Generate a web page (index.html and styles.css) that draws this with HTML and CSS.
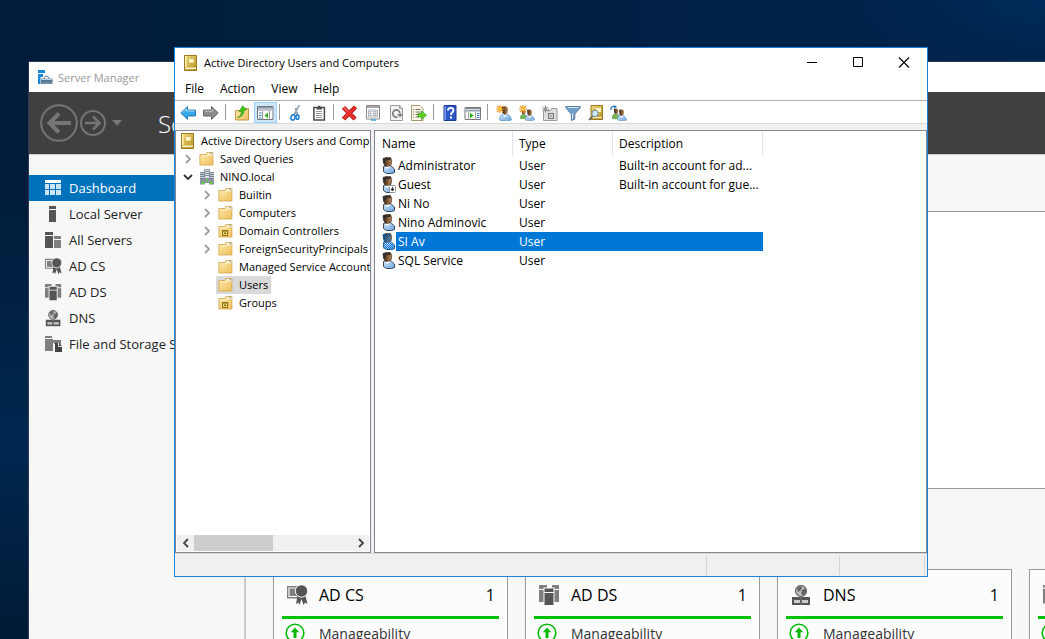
FILE: index.html
```html
<!DOCTYPE html>
<html lang="en">
<head>
  <meta charset="UTF-8">
  <title>Active Directory Users and Computers</title>
  <link rel="stylesheet" href="styles.css">
</head>
<body>

<!-- Shared icons -->
<svg class="sprite" aria-hidden="true">
  <defs>
    <linearGradient id="gold" x1="0" y1="0" x2="1" y2="1">
      <stop offset="0" stop-color="#f0dc82"/><stop offset="1" stop-color="#b98f1c"/>
    </linearGradient>
    <linearGradient id="paper" x1="0" y1="0" x2="1" y2="1">
      <stop offset="0" stop-color="#fce9ac"/><stop offset="1" stop-color="#eec05c"/>
    </linearGradient>
    <linearGradient id="shirt" x1="0" y1="0" x2="1" y2="1">
      <stop offset="0" stop-color="#d3e8fa"/><stop offset="1" stop-color="#6aa5df"/>
    </linearGradient>
    <linearGradient id="skin" x1="0" y1="0" x2="1" y2="0">
      <stop offset="0" stop-color="#2b2119"/><stop offset=".4" stop-color="#6b4a2d"/><stop offset="1" stop-color="#c08c5c"/>
    </linearGradient>
    <pattern id="checker" width="2" height="2" patternUnits="userSpaceOnUse">
      <path d="M0 0h1v1H0zM1 1h1v1H1z" fill="#0078d7"/>
    </pattern>
  </defs>
  <symbol id="book" viewBox="0 0 16 16">
    <path d="M1.500.5h12v15h-12z" fill="url(#gold)" stroke="#9a7a1d"/>
    <path d="M2 1h1.500v11H2z" fill="#fff3b5"/>
    <path d="M5.500 3.500h5.500v4.500H5.500z" fill="#fff6c8" stroke="#c9a83c" stroke-width=".6"/>
    <path d="M2.500 12.500h10.500v1.500H2.500z" fill="#f7f0d2"/>
  </symbol>
  <symbol id="folder" viewBox="0 0 16 16">
    <path d="M.9 3.500h6l1-2h6v12.500H.9z" fill="url(#paper)" stroke="#d1a448" stroke-width=".8"/>
    <path d="M8.500 2.300h5v1.200h-5z" fill="#fff"/>
    <path d="M11.500 2.300h1.500v1.200h-1.500z" fill="#3d8fdc"/>
    <path d="M2 5h6l1-1h4.500" fill="none" stroke="#fff3cc" stroke-width=".9"/>
  </symbol>
  <symbol id="ou" viewBox="0 0 16 16">
    <use href="#folder"/>
    <path d="M4 7h6v6H4z" fill="#8d741c"/>
    <path d="M5 8.500h4v3.500H5z" fill="#e6d268"/>
    <path d="M6 9.500h2v1.500H6z" fill="#8d741c"/>
  </symbol>
  <symbol id="domain" viewBox="0 0 16 16">
    <path d="M1 3h5v10H1zM10 3h5v10h-5z" fill="#c3ccd4"/>
    <path d="M5.500.5h5v12h-5z" fill="#dfe5ea" stroke="#75828e" stroke-width=".8"/>
    <path d="M1 3.500h4.500M1 5.500h4.500M1 7.500h4.500M1 9.500h4.500M10.500 3.500H15M10.500 5.500H15M10.500 7.500H15M10.500 9.500H15M6 2.500h4M6 4.500h4M6 6.500h4" stroke="#66737f" stroke-width=".8"/>
    <path d="M1 10h5v5.500H1zM10 10h5v5.500h-5zM6 9h4v5H6z" fill="#8a969f"/>
    <path d="M3 13h2v2H3zM11 13h2v2h-2zM7 10.500h2V12H7z" fill="#5ad71a"/>
  </symbol>
  <symbol id="user" viewBox="0 0 14 17">
    <path d="M1.500 9.500 4 8.500h4.500l4 3.500v3.500l-3 1h-5l-3-2z" fill="url(#shirt)" stroke="#25364c" stroke-width=".9"/>
    <path d="M1 1.500 4 .6h4.500l1.200 3-.7 4.400-2.500 1.800L3 9 1.500 6z" fill="url(#skin)" stroke="#3b2b1c" stroke-width=".7"/>
    <path d="M1.300 1.500 8.800.8v2L4 3.200 3 6 1.500 5z" fill="#33302e"/>
    <path d="M3 10l2.500 2L8.500 9.500z" fill="#fff"/>
  </symbol>
  <symbol id="person" viewBox="0 0 12 14">
    <path d="M.5 13c0-4 1.500-5.500 5-5.500S11 9.500 11.500 13c-2 1.200-9 1.200-11 0z" fill="url(#shirt)" stroke="#5d8ec0" stroke-width=".7"/>
    <path d="M3.500 8 5.500 10.500 7.500 8z" fill="#fff"/>
    <path d="M2.500.8 6.500.3l2 2-.5 4-2.500 2L3 6.300z" fill="url(#skin)"/>
  </symbol>
  <symbol id="spark" viewBox="0 0 8 8">
    <path d="M4 0v8M0 4h8M1 1l6 6M7 1 1 7" stroke="#f39a1c" stroke-width="1.200"/>
    <circle cx="4" cy="4" r="1.500" fill="#ffcf57"/>
  </symbol>
  <symbol id="cert" viewBox="0 0 21 21">
    <path d="M.7 1.700h10v11H.7z" fill="#fff" stroke="#7f7f7f" stroke-width="1.400"/>
    <path d="M2.500 3.500h8v7.500h-8z" fill="#7f7f7f"/>
    <path d="M10.500 11h8l2 8-2.500-1.500L16.500 20l-2-6-2 6-1-2.500L9 19z" fill="#555"/>
    <circle cx="14.500" cy="6" r="6.200" fill="#555" stroke="#fafafa"/>
  </symbol>
  <symbol id="adds" viewBox="0 0 21 21">
    <path d="M0 0h8v3H5v14H0zM13 0h7v17h-5V3h-2z" fill="#7f7f7f"/>
    <path d="M0 4.500h5M15 4.500h5" stroke="#fafafa"/>
    <path d="M4.500 2.500h11v18h-11z" fill="#fafafa"/>
    <path d="M5.500 3.500h9V7h-9zM5.500 8h9v12h-9z" fill="#555"/>
  </symbol>
  <symbol id="dns" viewBox="0 0 21 21">
    <circle cx="10" cy="6" r="5.500" fill="#bbb" stroke="#666" stroke-width="1.200"/>
    <path d="M6 3l3-2 2 1-1 3-3 2zM11 5l4-2v5l-3 3-2-3z" fill="#666"/>
    <path d="M1 12h18v8H1z" fill="#555"/>
    <path d="M3 15h6v3H3zM11 15h6v3h-6z" fill="#ccc"/>
    <path d="M10 12v8" stroke="#777"/>
  </symbol>
  <symbol id="files" viewBox="0 0 17 17">
    <path d="M0 0h7v2H0zM0 3h8v12H0z" fill="#7f7f7f"/>
    <path d="M8 4h8v3H8z" fill="#7f7f7f"/>
    <path d="M8.500 6.500h8v10h-8z" fill="#f7f7f7"/>
    <path d="M9 5h7v3H9z" fill="#7f7f7f"/>
    <path d="M10 7h4l3 3v6h-7z" fill="#444"/>
    <path d="M13.500 7v3.500H17" fill="none" stroke="#fafafa" stroke-width=".9"/>
  </symbol>
  <symbol id="up-circle" viewBox="0 0 20 20">
    <circle cx="10" cy="10" r="8.800" fill="#fff" stroke="#00b900" stroke-width="1.600"/>
    <path d="M10 4.500l4.200 4.700h-2.700V15h-3V9.200H5.800z" fill="#00b900"/>
  </symbol>
  <symbol id="chevron" viewBox="0 0 10 10">
    <path d="M3 1l4 4-4 4" fill="none" stroke="currentColor" stroke-width="1.800"/>
  </symbol>
</svg>

<!-- Server Manager (background window) -->
<section class="server-window">
  <header class="server-title">
    <svg width="15" height="15" viewBox="0 0 15 15">
      <path d="M0 0h7v3H0zM0 4h5v3H2.500v7H0z" fill="#1c87d6"/>
      <path d="M3 8.500h11.500V14H3z" fill="#6d8ca6"/>
      <path d="M6 8.500c0-3 5-3 5 0M3 11h11.500" fill="none" stroke="#42647f"/>
      <path d="M3.500 9.500h10.500" stroke="#dce6ee" stroke-width=".8"/>
    </svg>
    <span>Server Manager</span>
  </header>
  <div class="server-nav">
    <button class="nav-button" aria-label="Back">
      <svg width="38" height="38" viewBox="0 0 38 38" fill="none" stroke="#757575">
        <circle cx="19" cy="19" r="17.800" stroke-width="2"/>
        <path d="M9 19h22M19 9.500 9.500 19l9.500 9.500" stroke-width="4"/>
      </svg>
    </button>
    <button class="nav-button" aria-label="Forward">
      <svg width="26" height="26" viewBox="0 0 26 26" fill="none" stroke="#757575">
        <circle cx="13" cy="13" r="12" stroke-width="2"/>
        <path d="M5 13h15M13 6.500l6.500 6.500-6.500 6.500" stroke-width="2.600"/>
      </svg>
    </button>
    <button class="nav-button nav-more" aria-label="History">
      <svg width="10" height="6" viewBox="0 0 10 6"><path d="M0 0h10L5 6z" fill="#757575"/></svg>
    </button>
    <h1>Server Manager</h1>
  </div>
  <div class="server-body">
    <nav class="server-sidebar">
      <a href="#" class="side-link active">
        <svg width="17" height="16" viewBox="0 0 17 16">
          <path d="M0 0h16v3H0z" fill="#fff"/>
          <path d="M0 4h4v5H0zM5 4h5v5H5zM11 4h5v5h-5zM0 10h4v5H0zM5 10h5v5H5zM11 10h5v5h-5z" fill="#cde4f5"/>
        </svg>Dashboard</a>
      <a href="#" class="side-link">
        <svg width="17" height="16" viewBox="0 0 17 16"><path d="M4 0h7v3H4zM4 4h7v12H4z" fill="#555"/></svg>Local Server</a>
      <a href="#" class="side-link">
        <svg width="17" height="16" viewBox="0 0 17 16">
          <path d="M0 0h8v3H0zM0 4h8v12H0z" fill="#555"/>
          <path d="M9 4h7v3H9zM9 8h7v8H9z" fill="#7f7f7f"/>
        </svg>All Servers</a>
      <a href="#" class="side-link"><svg width="17" height="17"><use href="#cert"/></svg>AD CS</a>
      <a href="#" class="side-link"><svg width="17" height="17"><use href="#adds"/></svg>AD DS</a>
      <a href="#" class="side-link"><svg width="17" height="17"><use href="#dns"/></svg>DNS</a>
      <a href="#" class="side-link"><svg width="17" height="17"><use href="#files"/></svg>File and Storage Services</a>
    </nav>
    <main class="server-main">
      <div class="welcome"></div>
      <div class="tiles">
        <article class="tile">
          <h2><svg width="21" height="21"><use href="#cert"/></svg>AD CS <span class="count">1</span></h2>
          <p><svg width="20" height="20"><use href="#up-circle"/></svg>Manageability</p>
        </article>
        <article class="tile">
          <h2><svg width="21" height="21"><use href="#adds"/></svg>AD DS <span class="count">1</span></h2>
          <p><svg width="20" height="20"><use href="#up-circle"/></svg>Manageability</p>
        </article>
        <article class="tile">
          <h2><svg width="21" height="21"><use href="#dns"/></svg>DNS <span class="count">1</span></h2>
          <p><svg width="20" height="20"><use href="#up-circle"/></svg>Manageability</p>
        </article>
        <article class="tile">
          <h2><svg width="21" height="21"><use href="#files"/></svg></h2>
          <p><svg width="20" height="20"><use href="#up-circle"/></svg></p>
        </article>
      </div>
    </main>
  </div>
</section>

<!-- Active Directory Users and Computers -->
<section class="ad-window">
  <header class="ad-title">
    <svg width="16" height="16"><use href="#book"/></svg>
    <span>Active Directory Users and Computers</span>
    <div class="window-controls">
      <button aria-label="Minimize"><svg width="12" height="11" viewBox="0 0 12 11"><path d="M1 5.500h10" stroke="#000"/></svg></button>
      <button aria-label="Maximize"><svg width="12" height="11" viewBox="0 0 12 11"><path d="M1.500.5h9v9h-9z" fill="none" stroke="#000"/></svg></button>
      <button aria-label="Close"><svg width="12" height="11" viewBox="0 0 12 11"><path d="M1 .5l10 10M11 .5l-10 10" stroke="#000" stroke-width="1.100"/></svg></button>
    </div>
  </header>

  <div class="menu-bar">
    <button>File</button>
    <button>Action</button>
    <button>View</button>
    <button>Help</button>
  </div>

  <div class="toolbar">
    <button aria-label="Back"><svg width="16" height="16" viewBox="0 0 16 16"><path d="M.8 8 7.500 1.500V5h8v6h-8v3.500z" fill="#35a8ec" stroke="#2273b5" stroke-width=".9"/><path d="M2.500 7.500 6.500 3.800V6h8" fill="none" stroke="#a7dcfa"/></svg></button>
    <button aria-label="Forward"><svg width="16" height="16" viewBox="0 0 16 16"><path d="M15.200 8 8.500 1.500V5h-8v6h8v3.500z" fill="#8c8c8c" stroke="#5e5e5e" stroke-width=".9"/><path d="M1.500 6.200h8V4" fill="none" stroke="#c4c4c4"/></svg></button>
    <span class="separator"></span>
    <button aria-label="Up one level"><svg width="16" height="16" viewBox="0 0 16 16"><path d="M1.500 5.500h7l1-2h5v11.500h-13z" fill="url(#paper)" stroke="#b98f3a" stroke-width=".9"/><path d="M3.500 12.500C6 12 7.500 9.500 7.300 6L5 6.500 8.700.8 12.500 5 10 5.200c0 4-2.500 6.800-6.500 7.300z" fill="#43c41f" stroke="#238a10" stroke-width=".6"/></svg></button>
    <button class="on" aria-label="Show console tree"><svg width="17" height="16" viewBox="0 0 17 16"><path d="M.5 1.500h15.500v13H.5z" fill="#fff" stroke="#777"/><path d="M1 2h14.500v3.500H1z" fill="#8796a8"/><path d="M1 4h14.500" stroke="#fff" stroke-width=".8"/><path d="M5.500 6v8.500M12.500 6v8.500" stroke="#999"/><path d="M2 8h2.500M2 10.500h2.500M2 13h2.500" stroke="#3976c4"/><path d="M11 7.500v6L7.500 10.500z" fill="#2fb324"/></svg></button>
    <span class="separator"></span>
    <button aria-label="Cut"><svg width="16" height="16" viewBox="0 0 16 16"><path d="M11.500 0 6 10M7.500 3l2.500 8" stroke="#7d95a8" stroke-width="1.600"/><path d="M11.500.5 8 7.500" stroke="#d5e2ec" stroke-width=".7"/><ellipse cx="5" cy="12.500" rx="2" ry="2.600" fill="none" stroke="#1e83d2" stroke-width="1.600" transform="rotate(20 5 12.500)"/><ellipse cx="9.500" cy="12" rx="1.500" ry="2.300" fill="none" stroke="#1e83d2" stroke-width="1.600"/></svg></button>
    <button aria-label="Paste"><svg width="16" height="16" viewBox="0 0 16 16"><path d="M2.900 2.500h10.500v12.500H2.900z" fill="#fff" stroke="#4b4b4b" stroke-width="1.500"/><path d="M5.500 4.500v-2H7V.8h2.500v1.700H11v2z" fill="#4b4b4b"/><path d="M5 6.500h6M5 8.500h6M5 10.500h6M5 12.500h6" stroke="#999"/></svg></button>
    <span class="separator"></span>
    <button aria-label="Delete"><svg width="17" height="16" viewBox="0 0 17 16"><path d="M2.500 2.500 14 14M14.500 2 2.500 14" stroke="#a91313" stroke-width="4.400"/><path d="M2.500 2.500 14 14M14.500 2 2.500 14" stroke="#e8302b" stroke-width="3"/><path d="M2.500 2 7 6.500" stroke="#f99" stroke-width=".9"/></svg></button>
    <button aria-label="Properties"><svg width="16" height="16" viewBox="0 0 16 16"><path d="M1.500.5h13v13.500h-13z" fill="#fff" stroke="#888"/><path d="M2 1h12v2H2z" fill="#a6a6a6"/><path d="M3.500 5h9v7h-9z" fill="#f4f4f4" stroke="#a0a8b0" stroke-width=".8"/><path d="M4.500 6.800h2M8 6.800h3.500M4.500 8.600h2M8 8.600h3.500M4.500 10.400h2M8 10.400h3.500" stroke="#8c9aac" stroke-width=".9"/><path d="M6 15h5" stroke="#39a9dc" stroke-width="1.500"/></svg></button>
    <button aria-label="Refresh"><svg width="16" height="16" viewBox="0 0 16 16"><path d="M2.500.5h9l3 3v12h-12z" fill="#f3f3f3" stroke="#9a9a9a"/><path d="M11.500.5v3h3" fill="none" stroke="#9a9a9a"/><path d="M9.500 12A3.600 3.600 0 1 1 12 8.500" fill="none" stroke="#808080" stroke-width="1.800"/><path d="M9 9h6l-3 3.500z" fill="#808080"/></svg></button>
    <button aria-label="Export list"><svg width="17" height="16" viewBox="0 0 17 16"><path d="M1.500.5h8.500l3 3v12H1.500z" fill="#fdf9e6" stroke="#a79a73"/><path d="M3 4.500h1M5.500 4.500h5M3 7h1M5.500 7h5M3 9.500h1M5.500 9.500h3M3 12h1M5.500 12h3" stroke="#6f6f6f"/><path d="M8 8.500h3.500V6l5 4.200-5 4.300V12H8z" fill="#5fd32a" stroke="#2f9a12" stroke-width=".7"/></svg></button>
    <span class="separator"></span>
    <button aria-label="Help"><svg width="16" height="16" viewBox="0 0 16 16"><path d="M2 .5h12v15H2z" fill="#2d56c8" stroke="#1c3a94"/><path d="M2.500 1h1.500v14H2.500z" fill="#7c9aed"/><path d="M6 5.500C6 2 11.500 2 11.500 5.200 11.500 7.500 9 7.200 9 10" fill="none" stroke="#fff" stroke-width="1.900"/><path d="M8 11.500h2v2H8z" fill="#fff"/></svg></button>
    <button aria-label="Show action pane"><svg width="17" height="16" viewBox="0 0 17 16"><path d="M1 2.500h15.500v12H1z" fill="#fff" stroke="#777"/><path d="M1.500 3H16v3.500H1.500z" fill="#8796a8"/><path d="M1.500 4.700H16" stroke="#fff" stroke-width=".8"/><path d="M11.500 7v7.500M4.500 7v7.500" stroke="#aaa"/><path d="M13 8.500h2.500M13 10.500h2.500M13 12.500h2.500" stroke="#3976c4"/><path d="M6 7.500v6l3.500-3z" fill="#2fb324"/></svg></button>
    <span class="separator"></span>
    <button aria-label="New user"><svg width="17" height="16" viewBox="0 0 17 16"><use href="#person" x="4" y="1" width="13" height="15"/><use href="#spark" x="1" y="0" width="8" height="8"/></svg></button>
    <button aria-label="New group"><svg width="17" height="16" viewBox="0 0 17 16"><use href="#person" x="2" y="4" width="8" height="10"/><path d="M2 14c0-3 1-4.500 3.500-4.500S8.500 11 9 14z" fill="#74b64d"/><use href="#person" x="7" y="4" width="10" height="12"/><use href="#spark" x="1" y="0" width="8" height="8"/></svg></button>
    <button aria-label="New organizational unit"><svg width="17" height="16" viewBox="0 0 17 16"><path d="M2.500 5.500h7l1-2h5.500v12H2.500z" fill="#dedede" stroke="#9a9a9a"/><path d="M7 8h6v6H7z" fill="#777"/><path d="M8.200 9.200h3.600v3.600H8.200z" fill="#eee"/><path d="M9 10.500h2v1H9z" fill="#777"/><path d="M4.500.5v7M1 4h7M2 1.500l5 5M7 1.500l-5 5" stroke="#8b8b8b"/></svg></button>
    <button aria-label="Filter"><svg width="16" height="16" viewBox="0 0 16 16"><path d="M.8 1.500h14.400v1.300L9.800 9v5L6.300 15.500V9L.8 2.800z" fill="#6f9fca" stroke="#48698a" stroke-width=".8"/><path d="M2.500 2.500h11" stroke="#d9e9f7"/><path d="M7.500 8.500v5.500" stroke="#dbeaf6"/></svg></button>
    <button aria-label="Find"><svg width="16" height="16" viewBox="0 0 16 16"><path d="M3 .5h11.500v14H3z" fill="url(#gold)" stroke="#9a7a1d"/><path d="M8 3h5v4H8z" fill="#fff6c8"/><path d="M4 12.500h10" stroke="#f7f0d2"/><path d="M4.500 11.500 1 15" stroke="#555" stroke-width="1.600"/><circle cx="7" cy="8.500" r="3.200" fill="#cfe8f7" stroke="#6d8799"/></svg></button>
    <button aria-label="Add to group"><svg width="17" height="16" viewBox="0 0 17 16"><use href="#person" x="2" y="3" width="9" height="11"/><path d="M2 14c0-3 1-5 3.500-5S8.500 11 9 14z" fill="#74b64d"/><use href="#person" x="7" y="4" width="10" height="12"/><path d="M.8 5C.8 2 2 1 5 1.500" fill="none" stroke="#2d78b8" stroke-width="1.300"/><path d="M4.500 0 7 2 4 3.500z" fill="#2d78b8"/></svg></button>
  </div>

  <div class="panes">
    <div class="tree-pane">
      <ul class="tree">
        <li>
          <div class="row"><span class="node"><svg width="16" height="16"><use href="#book"/></svg>Active Directory Users and Computers</span></div>
          <ul>
            <li><div class="row"><button class="toggle" aria-label="Expand"><svg width="10" height="10"><use href="#chevron"/></svg></button><span class="node"><svg width="16" height="16"><use href="#folder"/></svg>Saved Queries</span></div></li>
            <li>
              <div class="row"><button class="toggle open" aria-label="Collapse"><svg width="10" height="10"><use href="#chevron"/></svg></button><span class="node"><svg width="16" height="16"><use href="#domain"/></svg>NINO.local</span></div>
              <ul class="nested">
                <li><div class="row"><button class="toggle" aria-label="Expand"><svg width="10" height="10"><use href="#chevron"/></svg></button><span class="node"><svg width="16" height="16"><use href="#folder"/></svg>Builtin</span></div></li>
                <li><div class="row"><button class="toggle" aria-label="Expand"><svg width="10" height="10"><use href="#chevron"/></svg></button><span class="node"><svg width="16" height="16"><use href="#folder"/></svg>Computers</span></div></li>
                <li><div class="row"><button class="toggle" aria-label="Expand"><svg width="10" height="10"><use href="#chevron"/></svg></button><span class="node"><svg width="16" height="16"><use href="#ou"/></svg>Domain Controllers</span></div></li>
                <li><div class="row"><button class="toggle" aria-label="Expand"><svg width="10" height="10"><use href="#chevron"/></svg></button><span class="node"><svg width="16" height="16"><use href="#folder"/></svg>ForeignSecurityPrincipals</span></div></li>
                <li><div class="row leaf"><span class="node"><svg width="16" height="16"><use href="#folder"/></svg>Managed Service Accounts</span></div></li>
                <li><div class="row leaf"><span class="node selected"><svg width="16" height="16"><use href="#folder"/></svg>Users</span></div></li>
                <li><div class="row leaf"><span class="node"><svg width="16" height="16"><use href="#ou"/></svg>Groups</span></div></li>
              </ul>
            </li>
          </ul>
        </li>
      </ul>
      <div class="scrollbar">
        <button class="scroll-left" aria-label="Scroll left"><svg width="10" height="10"><use href="#chevron"/></svg></button>
        <div class="track"><div class="thumb"></div></div>
        <button aria-label="Scroll right"><svg width="10" height="10"><use href="#chevron"/></svg></button>
      </div>
    </div>

    <div class="list-pane">
      <table class="list">
        <thead>
          <tr><th class="col-name">Name</th><th class="col-type">Type</th><th class="col-desc">Description</th></tr>
        </thead>
        <tbody>
          <tr><td><div class="entry"><svg width="14" height="17"><use href="#user"/></svg><span>Administrator</span></div></td><td>User</td><td>Built-in account for ad...</td></tr>
          <tr><td><div class="entry"><svg width="14" height="17" viewBox="0 0 14 17"><use href="#user"/><rect x="7.500" y="9.500" width="6" height="7" rx="1" fill="#fff" stroke="#888" stroke-width=".8"/><path d="M10.500 11v2.500M9 13l1.500 2 1.500-2z" fill="#222" stroke="#222" stroke-width=".8"/></svg><span>Guest</span></div></td><td>User</td><td>Built-in account for gue...</td></tr>
          <tr><td><div class="entry"><svg width="14" height="17"><use href="#user"/></svg><span>Ni No</span></div></td><td>User</td><td></td></tr>
          <tr><td><div class="entry"><svg width="14" height="17"><use href="#user"/></svg><span>Nino Adminovic</span></div></td><td>User</td><td></td></tr>
          <tr class="selected"><td><div class="entry"><svg width="14" height="17" viewBox="0 0 14 17"><use href="#user"/><path d="M1 1h8v7l4 4v4l-3 1H4l-3-2v-5l1-2-1-2z" fill="url(#checker)"/></svg><span>SI Av</span></div></td><td>User</td><td></td></tr>
          <tr><td><div class="entry"><svg width="14" height="17"><use href="#user"/></svg><span>SQL Service</span></div></td><td>User</td><td></td></tr>
        </tbody>
      </table>
    </div>
  </div>

  <footer class="status-bar">
    <span class="status-main"></span>
    <span class="status-mid"></span>
    <span class="status-end"></span>
  </footer>
</section>

</body>
</html>
```

FILE: styles.css
```css
* {
  box-sizing: border-box;
}
body {
  margin: 0;
  height: 100vh;
  overflow: hidden;
  position: relative;
  font-family: "Segoe UI", "Open Sans", "Noto Sans", sans-serif;
  font-size: 12px;
  color: #000;
  background:
    radial-gradient(ellipse 220px 90px at 100% 0, #002a5a, transparent),
    linear-gradient(90deg, transparent 10%, rgba(0, 48, 100, 0.3) 70%),
    linear-gradient(180deg, #001c3a 0%, #001c3a 30%, #00284f 70%, #001a36 100%);
}
button {
  margin: 0;
  padding: 0;
  border: none;
  background: none;
  font: inherit;
  color: inherit;
}
ul {
  list-style: none;
  margin: 0;
  padding: 0;
}
svg {
  display: block;
  flex: none;
}
.sprite {
  position: absolute;
  width: 0;
  height: 0;
}

/* Server Manager */
.server-window {
  position: absolute;
  left: 28px;
  top: 61px;
  right: 0;
  bottom: 0;
  display: flex;
  flex-direction: column;
  border: solid #2b3a50;
  border-width: 1px 0 0 1px;
  background-color: #f7f7f7;
  overflow: hidden;
}
.server-title {
  flex: none;
  display: flex;
  align-items: center;
  gap: 5px;
  height: 30px;
  padding-left: 9px;
  background-color: #fff;
  font-size: 11px;
  color: #999;
}
.server-nav {
  flex: none;
  display: flex;
  align-items: center;
  gap: 2px;
  height: 63px;
  padding-left: 11px;
  background-color: #404040;
  border-bottom: 1px solid #ccc;
}
.nav-more {
  margin-left: 4px;
}
.server-nav h1 {
  margin: 0 0 0 34px;
  font-size: 24px;
  font-weight: 300;
  color: #fff;
}
.server-body {
  flex: 1;
  display: flex;
  min-height: 0;
}
.server-sidebar {
  flex: none;
  width: 217px;
  padding-top: 20px;
  border-right: 2px solid #ccc;
}
.side-link {
  display: flex;
  align-items: center;
  gap: 7px;
  height: 26px;
  padding-left: 16px;
  font-size: 13px;
  color: #222;
  text-decoration: none;
}
.side-link.active {
  background-color: #0072bc;
  color: #fff;
}
.server-main {
  flex: 1;
  padding: 56px 0 0 27px;
}
.welcome {
  height: 278px;
  border: 1px solid #999;
  border-right: none;
  background-color: #fff;
}
.tiles {
  display: flex;
  gap: 17px;
  margin-top: 80px;
}
.tile {
  flex: none;
  width: 235px;
  height: 240px;
  padding: 0 8px;
  border: 1px solid #999;
  background-color: #fcfcfc;
}
.tile h2 {
  display: flex;
  align-items: center;
  gap: 11px;
  height: 49px;
  margin: 0;
  padding: 4px 4px 0 5px;
  border-bottom: 3px solid #00c200;
  font-size: 16px;
  font-weight: normal;
}
.tile .count {
  margin-left: auto;
}
.tile p {
  display: flex;
  align-items: center;
  gap: 14px;
  margin: 4px 0 0;
  padding-left: 3px;
  font-size: 14px;
  color: #333;
}

/* Active Directory window */
.ad-window {
  position: absolute;
  left: 174px;
  top: 47px;
  width: 754px;
  height: 530px;
  display: flex;
  flex-direction: column;
  border: 1px solid #1883d7;
  background-color: #fff;
}
.ad-title {
  flex: none;
  display: flex;
  align-items: center;
  gap: 5px;
  height: 30px;
  padding: 0 0 1px 8px;
  font-size: 11px;
}
.window-controls {
  display: flex;
  align-self: stretch;
  margin-left: auto;
}
.window-controls button {
  width: 46px;
  display: flex;
  align-items: center;
  justify-content: center;
}
.menu-bar {
  flex: none;
  display: flex;
  gap: 16px;
  height: 22px;
  padding: 0 0 1px 10px;
}
.toolbar {
  flex: none;
  display: flex;
  height: 24px;
  padding: 1px 0 0 2px;
  border: solid #b0b0b0;
  border-width: 1px 0;
  border-bottom-color: #d8d8d8;
}
.toolbar button {
  width: 23px;
  display: flex;
  align-items: center;
  justify-content: center;
  padding: 1px 2px 0 0;
}
.toolbar button.on {
  background-color: #cce8ff;
  border: 1px solid #99d1ff;
  padding: 1px 0 0;
}
.separator {
  width: 1px;
  margin: 2px 5px 3px 2px;
  background-color: #999;
}
.panes {
  flex: 1;
  display: flex;
  gap: 3px;
  min-height: 0;
  padding-top: 6px;
  background-color: #f0f0f0;
}
.tree-pane {
  flex: none;
  width: 196px;
  display: flex;
  flex-direction: column;
  justify-content: space-between;
  border: 1px solid #828790;
  background-color: #fff;
}
.tree {
  padding: 1px 0 0 2px;
  overflow: hidden;
  font-size: 11px;
}
.nested {
  padding-left: 19px;
}
.row {
  display: flex;
  height: 18px;
}
.row.leaf {
  padding-left: 19px;
}
.toggle {
  flex: none;
  width: 19px;
  display: flex;
  align-items: center;
  justify-content: center;
  color: #a0a0a0;
}
.toggle.open {
  color: #333;
}
.toggle.open svg {
  transform: rotate(90deg);
}
.node {
  display: flex;
  align-items: center;
  gap: 5px;
  padding: 0 3px 1px 2px;
  white-space: nowrap;
}
.node.selected {
  background-color: #d9d9d9;
}
.scrollbar {
  flex: none;
  display: flex;
  height: 16px;
  margin: 0 1px 1px;
  background-color: #f0f0f0;
}
.scrollbar button {
  width: 17px;
  display: flex;
  align-items: center;
  justify-content: center;
  color: #444;
}
.scroll-left svg {
  transform: rotate(180deg);
}
.track {
  flex: 1;
}
.thumb {
  width: 50%;
  height: 100%;
  background-color: #cdcdcd;
}
.list-pane {
  flex: 1;
  border: 1px solid #828790;
  background-color: #fff;
}
.list {
  width: 388px;
  table-layout: fixed;
  border-collapse: separate;
  border-spacing: 0;
}
.list th,
.list td {
  padding: 0 0 0 6px;
  text-align: left;
  font-weight: normal;
  white-space: nowrap;
}
.list th {
  height: 25px;
  border-right: 1px solid #e5e5e5;
}
.list td {
  height: 19px;
}
.list .col-name {
  width: 138px;
}
.list th:first-child,
.list td:first-child {
  padding-left: 7px;
}
.list .col-type {
  width: 100px;
}
.list .col-desc {
  width: 150px;
}
.entry {
  display: flex;
  height: 19px;
  align-items: center;
}
.entry span {
  flex: 1;
  padding-left: 2px;
  line-height: 19px;
}
.list .selected td + td,
.list .selected span {
  background-color: #0078d7;
  color: #fff;
}
.status-bar {
  flex: none;
  display: flex;
  height: 23px;
  padding: 2px 2px 1px 0;
  background-color: #f0f0f0;
  border-top: 1px solid #d8d8d8;
}
.status-bar span {
  border-right: 1px solid #d5d5d5;
}
.status-main {
  flex: 1;
}
.status-mid {
  width: 133px;
}
.status-end {
  width: 85px;
}
```
